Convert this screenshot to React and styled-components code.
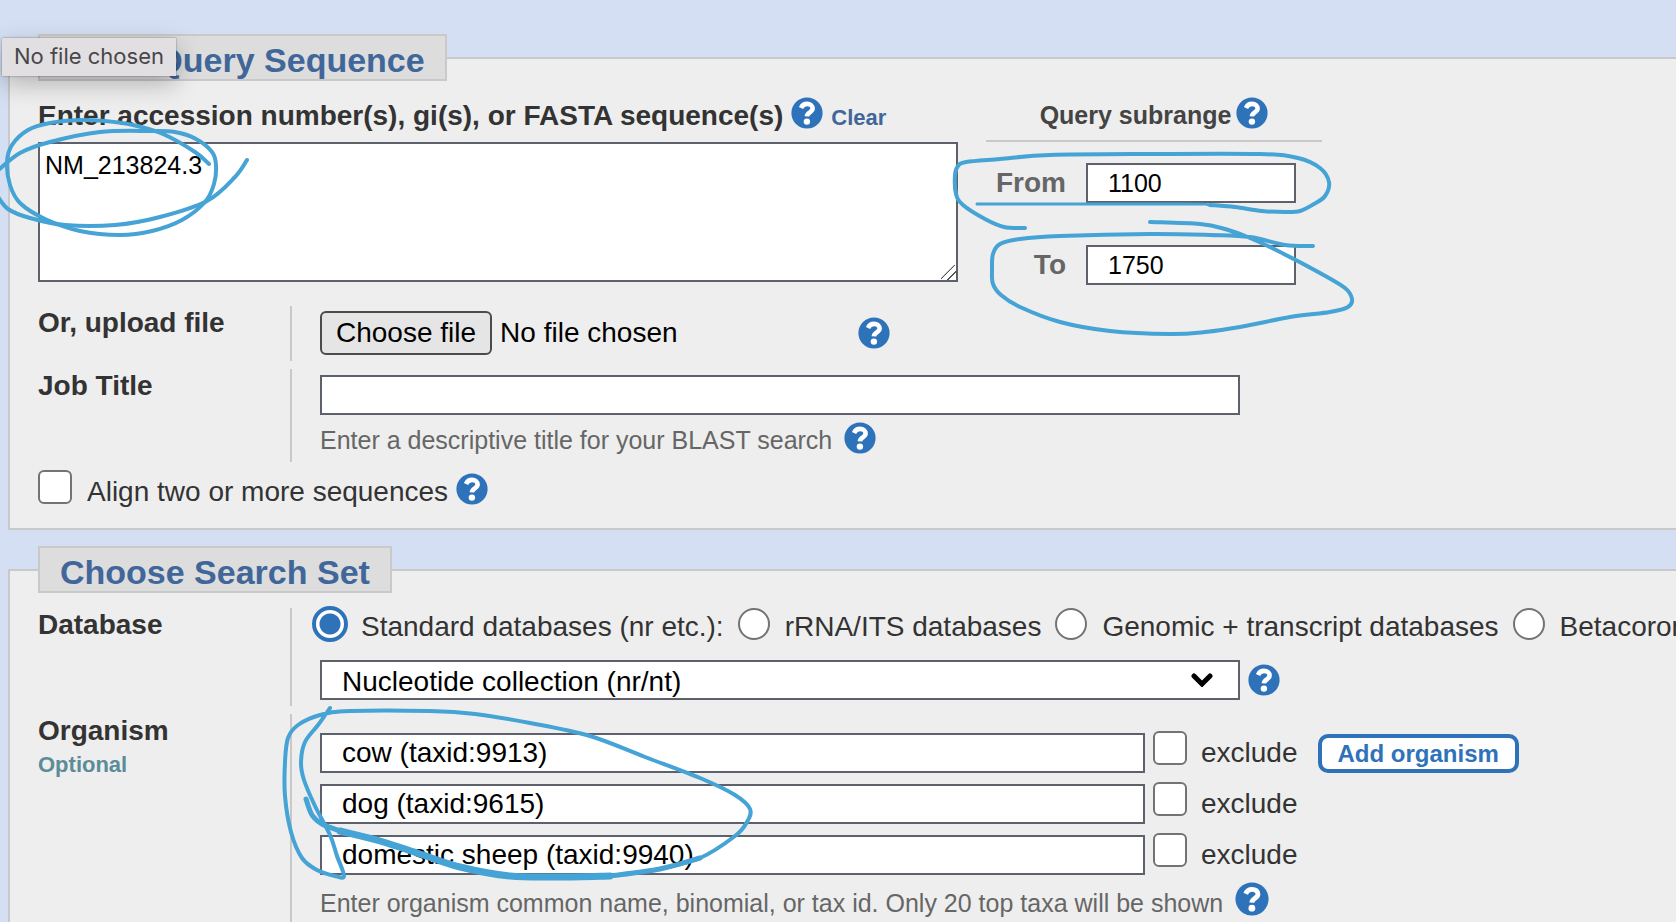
import React, { useRef, useState } from "react";
import styled, { createGlobalStyle, css } from "styled-components";

const GlobalStyle = createGlobalStyle`
  *, *::before, *::after { box-sizing: border-box; }
  body {
    margin: 0;
    background: #d5dff3;
    color: #333;
    font: 28px/36px Arial, "Liberation Sans", sans-serif;
  }
  button, input, select, textarea { font: inherit; margin: 0; }
`;

const Page = styled.main`
  position: relative;
  display: flex;
  flex-direction: column;
  gap: 16px;
  height: 100vh;
  padding: 34px 0 0 8px;
  overflow: hidden;
`;

const Panel = styled.fieldset`
  flex: none;
  min-width: 0;
  margin: 0;
  padding: 0 0 18px 28px;
  border: 2px solid #c9c9c9;
  border-right: 0;
  background: #eee;
`;

const PanelTitle = styled.legend`
  height: 47px;
  padding: 0 20px;
  border: 2px solid #c9c9c9;
  background: #ddd;
  color: #40669a;
  font-size: 34px;
  font-weight: bold;
  line-height: 48px;
  white-space: nowrap;
`;

const QueryArea = styled.div`
  display: flex;
  gap: 28px;
  padding-top: 16px;
  margin-bottom: 21px;
`;

const SequenceColumn = styled.div`
  flex: none;
  width: 920px;
`;

const Line = styled.div`
  display: flex;
  align-items: baseline;
  gap: 8px;
  white-space: nowrap;
`;

const SequenceHeader = styled(Line)`
  height: 36px;
  line-height: 38px;
`;

const StrongLabel = styled.label`
  font-weight: bold;
`;

const ClearLink = styled.a`
  color: #40669a;
  font-size: 22px;
  font-weight: bold;
  text-decoration: none;
`;

const HelpButton = styled.button`
  flex: none;
  align-self: ${(p) => (p.$center ? "center" : "flex-start")};
  width: ${(p) => (p.$large ? 34 : 32)}px;
  height: ${(p) => (p.$large ? 34 : 32)}px;
  padding: 0;
  border: 0;
  background: none;
  cursor: pointer;

  svg { display: block; width: 100%; height: 100%; }
`;

const controlFrame = css`
  border: 2px solid #5d616b;
  border-radius: 0;
  background: #fff;
  color: #000;
`;

const SequenceBox = styled.textarea`
  ${controlFrame}
  display: block;
  width: 100%;
  height: 140px;
  margin-top: 9px;
  padding: 6px 5px;
  font-size: 25px;
  line-height: 30px;
  resize: both;

  &::-webkit-scrollbar { width: 16px; height: 16px; }
  &::-webkit-resizer {
    background: linear-gradient(
      135deg,
      transparent 43%, #555 44%, #555 49%, transparent 50%,
      transparent 68%, #555 69%, #555 74%, transparent 75%
    );
  }
`;

const TextInput = styled.input`
  ${controlFrame}
  flex: none;
  width: ${(p) => p.$width}px;
  height: 40px;
  padding: 0 20px;
  font-size: ${(p) => (p.$small ? 25 : 28)}px;
`;

const Subrange = styled.div`
  flex: none;
  width: 336px;
`;

const SubrangeHeader = styled.div`
  display: flex;
  align-items: baseline;
  justify-content: center;
  gap: 5px;
  height: 45px;
  margin-bottom: 21px;
  border-bottom: 2px solid #c9c9c9;
  color: #444;
  font-size: 25px;
  font-weight: bold;
  white-space: nowrap;
`;

const RangeRows = styled.div`
  display: flex;
  flex-direction: column;
  gap: 42px;
`;

const RangeRow = styled.div`
  display: flex;
  align-items: center;
  gap: 20px;
`;

const RangeLabel = styled.label`
  width: 80px;
  color: #666;
  font-weight: bold;
  text-align: right;
`;

const FormRow = styled.div`
  display: grid;
  grid-template-columns: 252px 1fr;
  margin-bottom: 8px;
`;

const RowLabel = styled.div`
  font-weight: bold;
  line-height: 34px;
`;

const OptionalMark = styled.div`
  color: #5b8c98;
  font-size: 22px;
`;

const RowBody = styled.div`
  min-width: 0;
  padding: ${(p) => p.$top}px 0 ${(p) => p.$bottom}px 28px;
  border-left: 2px solid #c9c9c9;
`;

const FileLine = styled.div`
  display: flex;
`;

const FilePicker = styled.div`
  display: flex;
  align-items: center;
  gap: 8px;
  width: 538px;
  color: #000;
  white-space: nowrap;
`;

const FileButton = styled.button`
  height: 44px;
  padding: 0 14px;
  border: 2px solid #4b4b4b;
  border-radius: 6px;
  background: #e5e5e5;
  color: #000;
`;

const Hint = styled(Line)`
  gap: 12px;
  margin-top: 7px;
  color: #666;
  font-size: 25px;
`;

const HintText = styled.span`
  padding-top: ${(p) => (p.$lowered ? 3 : 0)}px;
`;

const Checkbox = styled.input`
  appearance: none;
  flex: none;
  width: 34px;
  height: 34px;
  border: 2px solid #737373;
  border-radius: 6px;
  background: #fff;

  &:checked { background: #2e72b9; }
`;

const CheckLine = styled.div`
  display: flex;
  align-items: flex-start;
  white-space: nowrap;
`;

const CheckLabel = styled.label`
  margin: 4px 0 0 15px;
`;

const AlignHelp = styled.div`
  display: flex;
  margin: 3px 0 0 8px;
`;

const RadioLine = styled.div`
  display: flex;
  gap: 14px;
  margin: 0 0 14px -6px;
  line-height: 38px;
  white-space: nowrap;
`;

const RadioOption = styled.label`
  display: flex;
  gap: 15px;
`;

const Radio = styled.input`
  appearance: none;
  flex: none;
  width: 32px;
  height: 32px;
  border: 2px solid #737373;
  border-radius: 50%;
  background: #fff;

  &:checked {
    border: 2px solid #fff;
    background: radial-gradient(circle, #2e72b9 10px, #fff 11px);
    outline: 4px solid #2e72b9;
    outline-offset: -2px;
  }
`;

const SelectFrame = styled.div`
  position: relative;
  width: 920px;
`;

const Select = styled.select`
  ${controlFrame}
  appearance: none;
  display: block;
  width: 100%;
  height: 40px;
  padding: 2px 60px 0 20px;
`;

const Chevron = styled.svg`
  position: absolute;
  top: 13px;
  right: 27px;
  width: 22px;
  height: 14px;
  pointer-events: none;
`;

const OrganismList = styled.div`
  display: flex;
  flex-direction: column;
  gap: 9px;
`;

const OrganismLine = styled.div`
  display: flex;
  align-items: flex-start;
  gap: 8px;
  height: 42px;
  white-space: nowrap;

  ${TextInput} { align-self: flex-end; }
`;

const AddButton = styled.button`
  align-self: flex-end;
  height: 39px;
  margin-left: 12px;
  padding: 0 16px;
  border: 4px solid #2e72b9;
  border-radius: 10px;
  background: #fff;
  color: #2e72b9;
  font-size: 24px;
  font-weight: bold;
  line-height: 30px;
`;

const ExcludeLabel = styled.label`
  margin: 4px 0 0 6px;
`;

const SearchRows = styled.div`
  padding-top: 15px;
`;

const Tooltip = styled.div`
  position: absolute;
  top: 38px;
  left: 2px;
  padding: 0 12px 2px;
  background: #e2dfe3;
  box-shadow: 0 0 2px rgba(0, 0, 0, 0.4), 0 8px 24px rgba(0, 0, 0, 0.25);
  color: #484649;
  font: 22px/36px Inter, sans-serif;
  white-space: nowrap;
`;

const Ink = styled.svg`
  position: absolute;
  top: 0;
  left: 0;
  width: 1400px;
  height: 922px;
  pointer-events: none;
  fill: none;
  stroke: #45a3d5;
  stroke-linecap: round;
  stroke-linejoin: round;
`;

const penStrokes = [
  { width: 4, points: [[209,164],[195,152],[163,134],[133,125],[105,121],[80,120],[50,123],[28,130],[12,145],[7,162],[10,185],[20,203],[45,219],[80,231],[120,235],[152,231],[182,220],[205,202],[214,184],[216,165],[212,152],[196,139],[175,132],[150,131],[100,132],[50,142],[20,153],[-4,172]] },
  { width: 4, points: [[-4,194],[8,209],[30,218],[65,225],[115,225],[160,217],[207,201],[235,177],[247,160]] },
  { width: 4, points: [[1025,228],[1004,227],[985,219],[963,205],[956,194],[955,175],[958,166],[966,162],[1000,159],[1050,155],[1150,154],[1260,154],[1298,158],[1320,168],[1329,182],[1325,196],[1314,204],[1300,211],[1285,212],[1262,211],[1235,207],[1210,205]] },
  { width: 3, points: [[1235,207],[1210,205],[1180,204],[977,204]] },
  { width: 4, points: [[1313,246],[1285,245],[1250,237],[1210,235],[1150,234],[1060,236],[1020,239],[1000,244],[993,254],[992,270],[993,284],[1001,295],[1020,307],[1060,322],[1110,331],[1170,334],[1205,332],[1240,327],[1290,317],[1330,312],[1348,307],[1352,299],[1345,288],[1320,273],[1280,252],[1250,238],[1225,229],[1200,224],[1150,222]] },
  { width: 4, points: [[330,708],[318,725],[305,742],[301,762],[304,780],[315,806],[330,835],[337,856],[344,876],[335,876],[317,870],[302,858],[291,832],[285,796],[285,762],[288,738],[298,725],[320,715],[350,711],[430,711],[475,714],[530,723],[590,736],[645,757],[700,778],[735,795],[750,809],[747,822],[735,836],[700,858],[660,869]] },
  { width: 5, points: [[700,858],[660,869],[610,876]] },
  { width: 7, points: [[610,876],[560,877],[510,876],[460,867],[420,854],[380,841],[340,831]] },
  { width: 5, points: [[340,831],[322,824],[312,815],[306,799]] },
];

// Smooths a list of pen positions into cubic segments.
function penPath(points) {
  return points.slice(0, -1).reduce((d, p, i) => {
    const before = points[i - 1] || p;
    const next = points[i + 1];
    const after = points[i + 2] || next;
    const c1 = [p[0] + (next[0] - before[0]) / 6, p[1] + (next[1] - before[1]) / 6];
    const c2 = [next[0] - (after[0] - p[0]) / 6, next[1] - (after[1] - p[1]) / 6];
    return `${d} C${c1} ${c2} ${next}`;
  }, `M${points[0]}`);
}

function Help({ topic, ...rest }) {
  return (
    <HelpButton type="button" aria-label={`Help: ${topic}`} {...rest}>
      <svg viewBox="0 0 32 32" aria-hidden="true">
        <circle cx="16" cy="16" r="15.6" fill="#2e72b9" />
        <path
          d="M10 11C11.4 7.8 13.2 6.9 16 6.9C19.4 6.9 21.6 8.8 21.6 11.6C21.6 15.4 16 15.2 15.9 19.4"
          fill="none"
          stroke="#fff"
          strokeWidth="4.6"
        />
        <circle cx="15.9" cy="24.6" r="3.2" fill="#fff" />
      </svg>
    </HelpButton>
  );
}

function FileField() {
  const picker = useRef(null);
  const [name, setName] = useState("No file chosen");
  return (
    <FilePicker>
      <input
        ref={picker}
        type="file"
        hidden
        aria-labelledby="upload-label"
        onChange={(e) => setName(e.target.files[0]?.name || "No file chosen")}
      />
      <FileButton type="button" onClick={() => picker.current.click()}>Choose file</FileButton>
      <span>{name}</span>
    </FilePicker>
  );
}

const databases = [
  "Standard databases (nr etc.):",
  "rRNA/ITS databases",
  "Genomic + transcript databases",
  "Betacoronavirus",
];

const organisms = ["cow (taxid:9913)", "dog (taxid:9615)", "domestic sheep (taxid:9940)"];

export default function App() {
  return (
    <Page>
      <GlobalStyle />
      <Panel>
        <PanelTitle>Enter Query Sequence</PanelTitle>
        <QueryArea>
          <SequenceColumn>
            <SequenceHeader>
              <StrongLabel htmlFor="sequence">
                Enter accession number(s), gi(s), or FASTA sequence(s)
              </StrongLabel>
              <Help topic="query sequence" />
              <ClearLink href="#clear">Clear</ClearLink>
            </SequenceHeader>
            <SequenceBox id="sequence" defaultValue="NM_213824.3" spellCheck={false} />
          </SequenceColumn>
          <Subrange>
            <SubrangeHeader>
              Query subrange
              <Help topic="query subrange" />
            </SubrangeHeader>
            <RangeRows>
              <RangeRow>
                <RangeLabel htmlFor="from">From</RangeLabel>
                <TextInput id="from" $width={210} $small defaultValue="1100" />
              </RangeRow>
              <RangeRow>
                <RangeLabel htmlFor="to">To</RangeLabel>
                <TextInput id="to" $width={210} $small defaultValue="1750" />
              </RangeRow>
            </RangeRows>
          </Subrange>
        </QueryArea>
        <FormRow>
          <RowLabel id="upload-label">Or, upload file</RowLabel>
          <RowBody $top={5} $bottom={6}>
            <FileLine>
              <FileField />
              <Help topic="file upload" $center />
            </FileLine>
          </RowBody>
        </FormRow>
        <FormRow>
          <RowLabel as="label" htmlFor="job-title">Job Title</RowLabel>
          <RowBody $top={6} $bottom={4}>
            <Line>
              <TextInput id="job-title" $width={920} />
            </Line>
            <Hint>
              <HintText>Enter a descriptive title for your BLAST search</HintText>
              <Help topic="job title" />
            </Hint>
          </RowBody>
        </FormRow>
        <CheckLine>
          <Checkbox type="checkbox" id="align" />
          <CheckLabel htmlFor="align">Align two or more sequences</CheckLabel>
          <AlignHelp>
            <Help topic="sequence alignment" />
          </AlignHelp>
        </CheckLine>
      </Panel>

      <Panel>
        <PanelTitle>Choose Search Set</PanelTitle>
        <SearchRows>
          <FormRow>
            <RowLabel>Database</RowLabel>
            <RowBody $top={0} $bottom={6}>
              <RadioLine>
                {databases.map((name, i) => (
                  <RadioOption key={name}>
                    <Radio type="radio" name="database" defaultChecked={i === 0} />
                    {name}
                  </RadioOption>
                ))}
              </RadioLine>
              <Line>
                <SelectFrame>
                  <Select aria-label="Database" defaultValue="nt">
                    <option value="nt">Nucleotide collection (nr/nt)</option>
                  </Select>
                  <Chevron viewBox="0 0 22 14" aria-hidden="true">
                    <path d="M3 3l8 8 8-8" fill="none" stroke="#000" strokeWidth="5" strokeLinecap="round" />
                  </Chevron>
                </SelectFrame>
                <Help topic="database" $center />
              </Line>
            </RowBody>
          </FormRow>
          <FormRow>
            <RowLabel>
              Organism
              <OptionalMark>Optional</OptionalMark>
            </RowLabel>
            <RowBody $top={17} $bottom={4}>
              <OrganismList>
                {organisms.map((name, i) => (
                  <OrganismLine key={name}>
                    <TextInput $width={825} defaultValue={name} aria-label={`Organism ${i + 1}`} />
                    <Checkbox type="checkbox" id={`exclude-${i}`} />
                    <ExcludeLabel htmlFor={`exclude-${i}`}>exclude</ExcludeLabel>
                    {i === 0 && <AddButton type="button">Add organism</AddButton>}
                  </OrganismLine>
                ))}
              </OrganismList>
              <Hint>
                <HintText $lowered>
                  Enter organism common name, binomial, or tax id. Only 20 top taxa will be shown
                </HintText>
                <Help topic="organism" $large />
              </Hint>
            </RowBody>
          </FormRow>
        </SearchRows>
      </Panel>

      <Tooltip role="tooltip">No file chosen</Tooltip>
      <Ink viewBox="0 0 1400 922" aria-hidden="true">
        {penStrokes.map((s, i) => (
          <path key={i} d={penPath(s.points)} strokeWidth={s.width} />
        ))}
      </Ink>
    </Page>
  );
}
